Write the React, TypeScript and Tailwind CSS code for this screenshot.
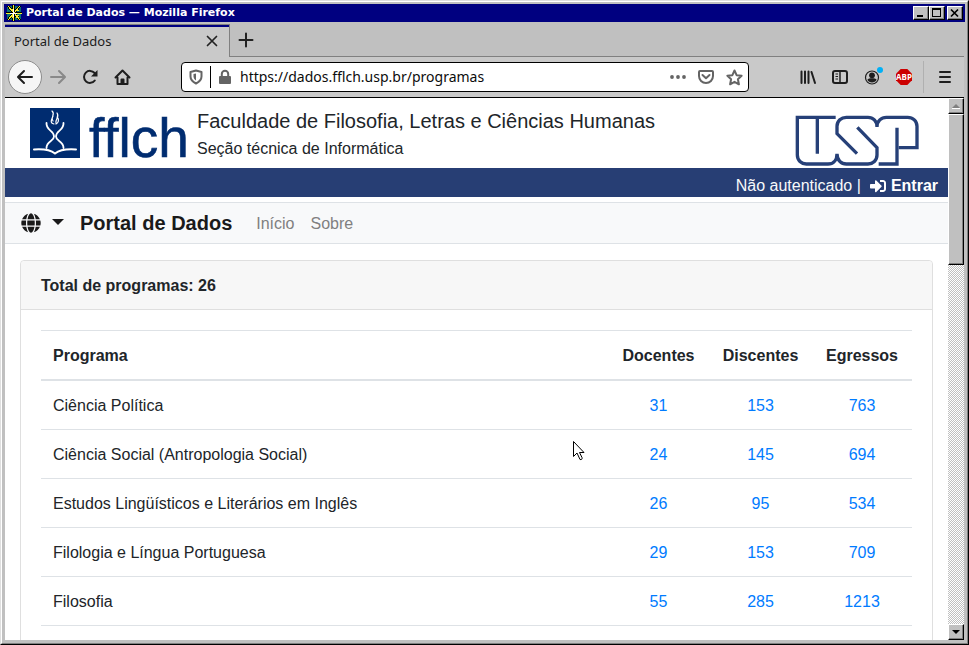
import React from "react";
import { FaGlobe, FaSignInAlt } from "react-icons/fa";

type Program = { name: string; docentes: number; discentes: number; egressos: number };

const programs: Program[] = [
  { name: "Ciência Política", docentes: 31, discentes: 153, egressos: 763 },
  { name: "Ciência Social (Antropologia Social)", docentes: 24, discentes: 145, egressos: 694 },
  { name: "Estudos Lingüísticos e Literários em Inglês", docentes: 26, discentes: 95, egressos: 534 },
  { name: "Filologia e Língua Portuguesa", docentes: 29, discentes: 153, egressos: 709 },
  { name: "Filosofia", docentes: 55, discentes: 285, egressos: 1213 },
];

const raised =
  "flex shrink-0 items-center justify-center bg-[#c0c0c0] border border-t-white border-l-white border-r-black border-b-black shadow-[inset_-1px_-1px_0_#808080]";

function TitleBar() {
  return (
    <header className="flex h-[18px] shrink-0 items-center bg-[#000080] pl-0.5 pr-0.5">
      <svg width="16" height="16" viewBox="0 0 16 16" aria-hidden="true" shapeRendering="crispEdges">
        <rect x="1" y="1" width="14" height="14" fill="#087070" />
        <path d="M7.500 0v16M0 8h16M2 1l12 14M14 1L2 15" stroke="#000" strokeWidth="2.500" />
        <path d="M7.500 0v16M0 8h16M2 1l12 14M14 1L2 15" stroke="#f5ee30" strokeWidth="1" />
        <path d="M7.500 4v8M4 8h7" stroke="#fff" strokeWidth="1" />
        <path d="M4.500 5.500h2v-2M10.500 3.500v2h2M4.500 10.500h2v2M10.500 12.500v-2h2" fill="none" stroke="#f5ee30" />
      </svg>
      <h1 className="ml-1 flex-1 font-['DejaVu_Sans',sans-serif] text-[11px] leading-4 font-bold text-white">
        Portal de Dados — Mozilla Firefox
      </h1>
      <div className="flex">
        <button aria-label="Minimizar" className={`${raised} h-3.5 w-4`}>
          <svg width="12" height="10" viewBox="0 0 12 10"><path d="M2 8h6" stroke="#000" strokeWidth="2" /></svg>
        </button>
        <button aria-label="Maximizar" className={`${raised} h-3.5 w-4`}>
          <svg width="12" height="10" viewBox="0 0 12 10" shapeRendering="crispEdges">
            <path d="M1 1h9M1.5 1v8M9.5 1v8M1 8.5h9" stroke="#000" fill="none" />
            <path d="M1 1h9" stroke="#000" strokeWidth="2" />
          </svg>
        </button>
        <button aria-label="Fechar" className={`${raised} ml-0.5 h-3.5 w-4`}>
          <svg width="12" height="10" viewBox="0 0 12 10"><path d="M2 1.5l7 7M9 1.5l-7 7" stroke="#000" strokeWidth="1.7" /></svg>
        </button>
      </div>
    </header>
  );
}

function TabStrip() {
  return (
    <div className="mt-0.5 flex h-[33px] shrink-0 bg-[#c0c0c0]">
      <div className="flex w-[225px] items-center border-t border-r border-[#808080] bg-[#c9c9c9] pr-2.5 pl-[9px] shadow-[inset_0_2px_0_#000080]">
        <span className="flex-1 font-['Noto_Sans',sans-serif] text-[13px] leading-5 text-[#1c1c1c]">Portal de Dados</span>
        <button aria-label="Fechar aba">
          <svg width="14" height="14" viewBox="0 0 14 14"><path d="M2.5 2.5l9 9M11.5 2.5l-9 9" stroke="#222" strokeWidth="1.700" strokeLinecap="round" /></svg>
        </button>
      </div>
      <div className="flex-1 border-b border-[#808080] pl-2">
        <button aria-label="Nova aba" className="flex h-8 items-center">
          <svg width="16" height="16" viewBox="0 0 16 16"><path d="M8 1.5v13M1.5 8h13" stroke="#222" strokeWidth="2" strokeLinecap="round" /></svg>
        </button>
      </div>
    </div>
  );
}

const iconButton = "flex h-8 w-8 shrink-0 items-center justify-center text-[#1e1e1e]";

function Toolbar() {
  return (
    <div className="flex h-[41px] shrink-0 items-center border-b border-black bg-[#c9c9c9] pl-[3px]">
      <button aria-label="Voltar" className="flex h-[34px] w-[34px] shrink-0 items-center justify-center rounded-full border border-[#8c8c8c] bg-[#f6f6f6]">
        <svg width="18" height="18" viewBox="0 0 18 18" fill="none" stroke="#1e1e1e" strokeWidth="2" strokeLinecap="round" strokeLinejoin="round"><path d="M16 9H2.5M8 3L2 9l6 6" /></svg>
      </button>
      <button aria-label="Avançar" className="flex h-8 w-8 shrink-0 items-center justify-center">
        <svg width="18" height="18" viewBox="0 0 18 18" fill="none" stroke="#898989" strokeWidth="2" strokeLinecap="round" strokeLinejoin="round"><path d="M2 9h13.500M10 3l6 6-6 6" /></svg>
      </button>
      <button aria-label="Recarregar" className={iconButton}>
        <svg width="16" height="16" viewBox="0 0 16 16" fill="none" stroke="currentColor" strokeWidth="2"><path d="M12.800 11.500A6 6 0 1 1 12.600 4" strokeLinecap="round" /><path d="M15.500 1v6.500H9z" fill="currentColor" stroke="none" /></svg>
      </button>
      <button aria-label="Página inicial" className={iconButton}>
        <svg width="17" height="17" viewBox="0 0 17 17" fill="none" stroke="currentColor" strokeWidth="2" strokeLinecap="round" strokeLinejoin="round"><path d="M1.500 8.500L8.500 1.500l7 7M3.500 8.500v6.500h10V8.500" /><path d="M7.500 14.500v-4h2v4" /></svg>
      </button>
      <div className="ml-[43px] flex h-[30px] flex-1 items-center rounded border border-black bg-white pl-[7px] text-[#646464]">
        <svg width="14" height="16" viewBox="0 0 14 16" fill="none" stroke="currentColor" strokeWidth="2" strokeLinejoin="round" aria-hidden="true"><path d="M7 1.500L12.500 3v4.500c0 3-2.500 5.500-5.500 7-3-1.500-5.500-4-5.500-7V3z" /><path d="M7 4.500v7c-1.500-1-2.500-2.500-2.500-4V5z" fill="currentColor" stroke="none" /></svg>
        <span className="ml-[7px] h-[22px] w-px bg-black" />
        <svg className="ml-[7px]" width="14" height="16" viewBox="0 0 14 16" aria-hidden="true"><rect x="1" y="7" width="12" height="8" rx="1" fill="currentColor" /><path d="M3.800 8V5a3.200 3.200 0 0 1 6.400 0v3" fill="none" stroke="currentColor" strokeWidth="2" /></svg>
        <input
          aria-label="Endereço"
          defaultValue="https://dados.fflch.usp.br/programas"
          className="ml-2 min-w-0 flex-1 bg-transparent font-['Noto_Sans',sans-serif] text-sm leading-5 text-[#0c0c0c] outline-none"
        />
        <button aria-label="Ações da página" className="flex h-7 w-7 items-center justify-center">
          <svg width="16" height="4" viewBox="0 0 16 4" fill="currentColor"><circle cx="2" cy="2" r="1.900" /><circle cx="8" cy="2" r="1.900" /><circle cx="14" cy="2" r="1.900" /></svg>
        </button>
        <button aria-label="Salvar no Pocket" className="flex h-7 w-7 items-center justify-center">
          <svg width="16" height="16" viewBox="0 0 16 16" fill="none" stroke="currentColor" strokeWidth="2" strokeLinecap="round" strokeLinejoin="round"><path d="M2 2h12a1 1 0 0 1 1 1v4a7 7 0 0 1-14 0V3a1 1 0 0 1 1-1z" /><path d="M4.500 6L8 9.300 11.500 6" /></svg>
        </button>
        <button aria-label="Adicionar aos favoritos" className="flex h-7 w-7 items-center justify-center">
          <svg width="17" height="17" viewBox="0 0 17 17" fill="none" stroke="currentColor" strokeWidth="2" strokeLinejoin="round"><path d="M8.500 1.500l2.100 4.700 5 .6-3.700 3.400 1 5.100-4.400-2.500-4.400 2.500 1-5.100L1.400 6.800l5-.6z" /></svg>
        </button>
      </div>
      <div className="ml-[43px] flex items-center">
        <button aria-label="Biblioteca" className={iconButton}>
          <svg width="16" height="16" viewBox="0 0 16 16" stroke="currentColor" strokeWidth="2" strokeLinecap="round"><path d="M1.500 2.500v11.500M5 2.500v11.500M8.500 2.500v11.500M11.500 3l3.500 11" /></svg>
        </button>
        <button aria-label="Barra lateral" className={iconButton}>
          <svg width="16" height="16" viewBox="0 0 16 16" fill="none" stroke="currentColor" strokeWidth="2"><rect x="1" y="2" width="14" height="12" rx="2" /><path d="M8 2v12" strokeWidth="1.500" /><path d="M3.500 5H6M3.500 7.500H6M3.500 10H6" strokeWidth="1" /></svg>
        </button>
        <button aria-label="Conta" className={iconButton}>
          <svg width="22" height="22" viewBox="0 0 22 22"><circle cx="11" cy="11.500" r="6.500" fill="none" stroke="currentColor" strokeWidth="1.200" /><circle cx="11" cy="9.300" r="2.900" fill="currentColor" /><path d="M6.300 13.700c1-1.200 2.500-1.500 4.700-1.500s3.700.3 4.700 1.500c-1 1.800-2.700 2.800-4.700 2.800s-3.700-1-4.700-2.800z" fill="currentColor" /><circle cx="19" cy="4" r="3" fill="#00b0f6" /></svg>
        </button>
        <button aria-label="Adblock Plus" className={iconButton}>
          <svg width="16" height="16" viewBox="0 0 16 16"><path d="M4.700 0h6.600L16 4.700v6.600L11.300 16H4.700L0 11.300V4.700z" fill="#cc0000" /><text x="8" y="11" textAnchor="middle" fontFamily="Open Sans, sans-serif" fontWeight="700" fontSize="8" fill="#fff">ABP</text></svg>
        </button>
        <span className="ml-[3px] h-8 w-px bg-[#b0b0b0]" />
        <button aria-label="Menu" className="flex h-8 w-10 items-center justify-center pl-0.5 text-[#1e1e1e]">
          <svg width="14" height="14" viewBox="0 0 14 14" stroke="currentColor" strokeWidth="2" strokeLinecap="round"><path d="M2 2h10M2 7h10M2 12h10" /></svg>
        </button>
      </div>
    </div>
  );
}

function FflchLogo() {
  return (
    <svg width="160" height="52" viewBox="0 0 160 52" role="img" aria-label="fflch" className="shrink-0 overflow-visible">
      <rect width="50" height="50" fill="#002c70" />
      <g fill="none" stroke="#fff" strokeLinecap="round">
        <path d="M16.500 15c-.5 8 7.500 7 7.500 13.500 0 5-7.500 4-7.500 11.500M33.500 15c.5 8-7.500 7-7.500 13.500 0 5 7.500 4 7.500 11.500" strokeWidth="1.800" />
        <path d="M4 41.500c7-.5 16 0 21 4 5-4 14-4.500 21-4" strokeWidth="2" />
        <path d="M22 3c4 3-2 6 1 10M27 5c3 4-2 6-1 10M24 16c-5-1-2-5-1-8M28 10c1 3 0 5-2 6" strokeWidth="1.200" />
      </g>
      <text x="59" y="49" fontFamily="Liberation Sans, sans-serif" fontSize="55" fill="#002c70" stroke="#002c70" strokeWidth="0.6">fflch</text>
    </svg>
  );
}

function UspLogo() {
  return (
    <svg width="125" height="52" viewBox="286 52 375 156" role="img" aria-label="USP" className="shrink-0">
      <g fill="none" stroke="#264078" strokeWidth="10">
        <path d="M408 59H293V172C293 188 305 199 320 199H385C400 199 412 188 412 168C412 188 425 199 440 199H505C520 199 532 188 532 172V150L473 89" />
        <path d="M472 168L412 108V86C412 70 425 59 440 59H505C520 59 532 70 532 88C532 70 545 59 560 59H624C640 59 652 70 652 86V150H597" />
        <path d="M592 90V199H537M353 59V168" />
      </g>
    </svg>
  );
}

function Page() {
  return (
    <main className="min-w-0 flex-1 overflow-hidden bg-white text-base leading-6 text-[#212529]">
      <div className="flex h-[70px] items-start justify-between pt-2.5 pr-7 pl-[25px]">
        <div className="flex">
          <FflchLogo />
          <div className="ml-[7px]">
            <p className="text-xl leading-[26px]">Faculdade de Filosofia, Letras e Ciências Humanas</p>
            <p className="mt-[3px]">Seção técnica de Informática</p>
          </div>
        </div>
        <div className="pt-[7px]">
          <UspLogo />
        </div>
      </div>
      <div className="flex h-[29px] items-center justify-end bg-[#273e74] pt-1.5 pr-2.5 text-[#f8f9fa]">
        <span>Não autenticado |</span>
        <a href="#entrar" className="ml-[9px] flex items-center gap-[5px] font-bold text-white">
          <FaSignInAlt className="h-4 w-4" />
          Entrar
        </a>
      </div>
      <nav className="mt-[5px] flex h-[42px] items-center border-y border-[#dee2e6] bg-[#f8f9fa] pl-4">
        <button aria-label="Idioma" className="flex items-center text-[#1a1a1a]">
          <FaGlobe className="h-5 w-5" />
          <span className="mb-0.5 ml-[11px] border-x-[6px] border-t-[6px] border-x-transparent border-t-[#1a1a1a]" />
        </button>
        <a href="#portal" className="ml-4 text-xl leading-[30px] font-bold text-[#1a1a1a]">Portal de Dados</a>
        <div className="ml-6 flex gap-4 pt-0.5 text-[#808080]">
          <a href="#inicio">Início</a>
          <a href="#sobre">Sobre</a>
        </div>
      </nav>
      <section className="mx-[15px] mt-4 rounded border border-[#dfdfdf]">
        <h2 className="rounded-t border-b border-[#dfdfdf] bg-[#f7f7f7] px-5 pt-[13px] pb-[11px] font-bold">Total de programas: 26</h2>
        <div className="p-5">
          <table className="w-full table-fixed border-separate border-spacing-0">
            <colgroup>
              <col />
              <col className="w-[102px]" />
              <col className="w-[102px]" />
              <col className="w-[100px]" />
            </colgroup>
            <thead>
              <tr>
                <th className="border-t border-b-2 border-[#dee2e6] px-3 pt-[13px] pb-[11px] text-left">Programa</th>
                <th className="border-t border-b-2 border-[#dee2e6] pt-[13px] pr-px pb-[11px] text-center">Docentes</th>
                <th className="border-t border-b-2 border-[#dee2e6] pt-[13px] pr-px pb-[11px] text-center">Discentes</th>
                <th className="border-t border-b-2 border-[#dee2e6] pt-[13px] pb-[11px] text-center">Egressos</th>
              </tr>
            </thead>
            <tbody>
              {programs.map((p) => (
                <tr key={p.name}>
                  <td className="border-b border-[#dee2e6] px-3 pt-[13px] pb-[11px]">{p.name}</td>
                  {[p.docentes, p.discentes, p.egressos].map((n, i) => (
                    <td key={i} className="border-b border-[#dee2e6] pt-[13px] pr-px pb-[11px] text-center last:pr-0">
                      <a href="#lista" className="text-[#007bff]">{n}</a>
                    </td>
                  ))}
                </tr>
              ))}
            </tbody>
          </table>
        </div>
      </section>
    </main>
  );
}

function ScrollBar() {
  return (
    <div className="flex w-4 shrink-0 flex-col bg-[repeating-conic-gradient(#c0c0c0_0%_25%,#ffffff_0%_50%)] bg-[length:2px_2px]">
      <button aria-label="Rolar para cima" className={`${raised} h-4 w-4`}>
        <svg width="8" height="5" viewBox="0 0 8 5"><path d="M4 0l4 4H0z" fill="#808080" /><path d="M0 4.500h8" stroke="#fff" /></svg>
      </button>
      <div className={`${raised} h-[151px] w-4`} />
      <div className="flex-1" />
      <button aria-label="Rolar para baixo" className={`${raised} h-4 w-4`}>
        <svg width="8" height="4" viewBox="0 0 8 4"><path d="M0 0h8L4 4z" fill="#000" /></svg>
      </button>
    </div>
  );
}

export default function App() {
  return (
    <div className="relative h-screen border border-t-[#dfdfdf] border-r-black border-b-black border-l-[#dfdfdf] font-['Liberation_Sans',Arial,sans-serif]">
      <div className="flex h-full flex-col border border-t-white border-r-[#808080] border-b-[#808080] border-l-white bg-[#c0c0c0] px-0.5 pt-0.5 pb-[3px]">
        <TitleBar />
        <div className="flex min-h-0 flex-1 flex-col px-px">
          <TabStrip />
          <Toolbar />
          <div className="flex min-h-0 flex-1">
            <Page />
            <ScrollBar />
          </div>
        </div>
      </div>
      <svg className="pointer-events-none absolute top-[440px] left-[572px]" width="12" height="20" viewBox="0 0 12 20" aria-hidden="true">
        <path d="M.5.500v15l3.500-3.500 3 6.500c1.500.5 2.500-.5 2-2l-2.500-5H11z" fill="#fff" stroke="#000" />
      </svg>
    </div>
  );
}
